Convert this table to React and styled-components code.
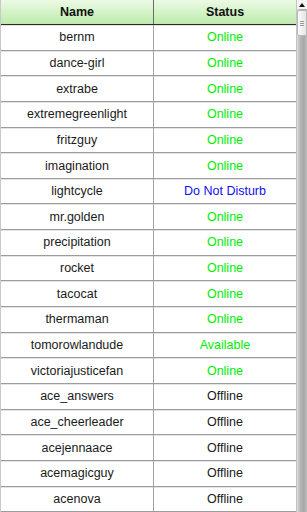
import React from "react";
import styled, { createGlobalStyle } from "styled-components";

const GlobalStyle = createGlobalStyle`
  html, body {
    margin: 0;
    padding: 0;
    background: #ffffff;
    overflow: hidden;
  }
  body {
    font-family: "Liberation Sans", Arial, sans-serif;
  }
`;

const Frame = styled.div`
  width: 307px;
  height: 512px;
  display: flex;
  overflow: hidden;
`;

const TableArea = styled.div`
  flex: 1;
  display: flex;
  flex-direction: column;
  border-left: 1px solid #c8c8c8;
  overflow: hidden;
`;

const HeaderRow = styled.div`
  display: grid;
  grid-template-columns: 152px 1fr;
  height: 24px;
  flex-shrink: 0;
  background: linear-gradient(to bottom, #ecfae6 0%, #d4f3c8 50%, #bfeaac 100%);
  border-bottom: 1px solid #2a2a2a;
`;

const HeaderCell = styled.div`
  display: flex;
  align-items: center;
  justify-content: center;
  font-weight: bold;
  font-size: 12.5px;
  color: #111;
  border-left: ${(p) => (p.first ? "none" : "1px solid #6a6a6a")};
`;

const Row = styled.div`
  display: grid;
  grid-template-columns: 152px 1fr;
  height: 24.65px;
  flex-shrink: 0;
  border-bottom: 1px solid #9c9c9c;
  box-shadow: inset 0 1px 0 #e4e4e4;
`;

const Cell = styled.div`
  display: flex;
  align-items: center;
  justify-content: center;
  font-size: 12.5px;
  color: ${(p) => p.color || "#1a1a1a"};
  border-left: ${(p) => (p.first ? "none" : "1px solid #a4a4a4")};
  white-space: nowrap;
`;

const ScrollBar = styled.div`
  width: 10px;
  flex-shrink: 0;
  display: flex;
  flex-direction: column;
  align-items: stretch;
  background: linear-gradient(to right, #dcdcdc 0%, #b4b4b4 35%, #a8a8a8 70%, #bdbdbd 100%);
  border-left: 1px solid #c4c4c4;
`;

const ArrowButton = styled.div`
  height: 9px;
  display: flex;
  align-items: center;
  justify-content: center;
  background: #f4f4f4;
`;

const Thumb = styled.div`
  height: 24px;
  margin: 1px 0 0 0;
  background: linear-gradient(to right, #fafafa, #e6e6e6);
  border: 1px solid #b8b8b8;
  border-radius: 2px;
  display: flex;
  flex-direction: column;
  align-items: center;
  justify-content: center;
  gap: 1px;
`;

const Grip = styled.span`
  width: 4px;
  height: 1px;
  background: #9a9a9a;
`;

const statusColors = {
  Online: "#00ee00",
  Available: "#00ee00",
  "Do Not Disturb": "#1010f0",
  Offline: "#1a1a1a",
};

const users = [
  ["bernm", "Online"],
  ["dance-girl", "Online"],
  ["extrabe", "Online"],
  ["extremegreenlight", "Online"],
  ["fritzguy", "Online"],
  ["imagination", "Online"],
  ["lightcycle", "Do Not Disturb"],
  ["mr.golden", "Online"],
  ["precipitation", "Online"],
  ["rocket", "Online"],
  ["tacocat", "Online"],
  ["thermaman", "Online"],
  ["tomorowlandude", "Available"],
  ["victoriajusticefan", "Online"],
  ["ace_answers", "Offline"],
  ["ace_cheerleader", "Offline"],
  ["acejennaace", "Offline"],
  ["acemagicguy", "Offline"],
  ["acenova", "Offline"],
];

const App = () => {
  return (
    <Frame>
      <GlobalStyle />
      <TableArea>
        <HeaderRow>
          <HeaderCell first>Name</HeaderCell>
          <HeaderCell>Status</HeaderCell>
        </HeaderRow>
        {users.map(([name, status]) => (
          <Row key={name}>
            <Cell first>{name}</Cell>
            <Cell color={statusColors[status]}>{status}</Cell>
          </Row>
        ))}
      </TableArea>
      <ScrollBar>
        <ArrowButton>
          <svg width="6" height="4" viewBox="0 0 6 4">
            <polygon points="3,0 6,4 0,4" fill="#111" />
          </svg>
        </ArrowButton>
        <Thumb>
          <Grip />
          <Grip />
          <Grip />
        </Thumb>
      </ScrollBar>
    </Frame>
  );
};

export default App;
